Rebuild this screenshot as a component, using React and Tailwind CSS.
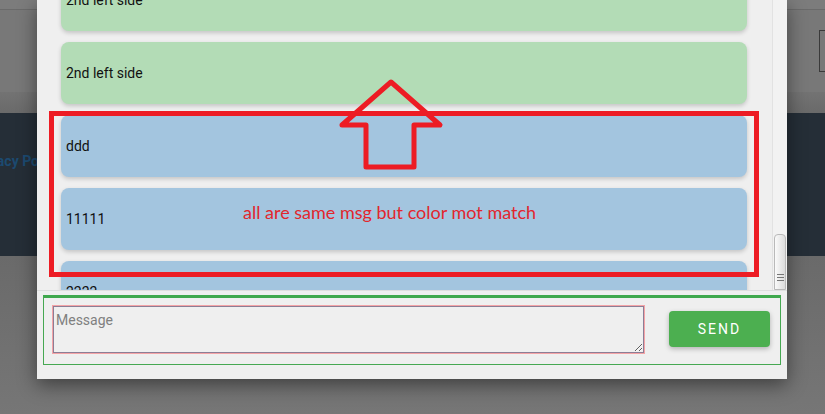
import React from "react";

const messages = [
  { text: "2nd left side", tone: "green" },
  { text: "2nd left side", tone: "green" },
  { text: "ddd", tone: "blue" },
  { text: "11111", tone: "blue" },
  { text: "2222", tone: "blue" },
];

const Bubble = ({ text, tone }) => (
  <div
    className={`h-[62px] mb-[11px] rounded-lg flex items-center pl-[5px] text-[14px] text-[#111] shadow-[0_2px_4px_rgba(0,0,0,0.18)] ${
      tone === "green" ? "bg-[#b3dcb6]" : "bg-[#a3c5df]"
    }`}
  >
    {text}
  </div>
);

export default function App() {
  return (
    <div className="relative w-[825px] h-[414px] overflow-hidden bg-[#717171]" style={{ fontFamily: "Roboto, 'Liberation Sans', sans-serif" }}>
      {/* page behind the overlay */}
      <div className="flex flex-col h-full">
        <div className="h-[10px] bg-[#7c7c7c] border-b border-[#6a6a6a]" />
        <div className="h-[82px] bg-[#787878] flex justify-end items-start pt-[20px]">
          <div className="w-[6px] h-[42px] border-l border-y border-[#3a3a3a]" />
        </div>
        <div className="h-[21px] bg-gradient-to-b from-[#737373] to-[#6a6a6a]" />
        <div className="h-[143px] bg-[#252e37] flex items-start pt-[38px]">
          <span className="-ml-[28px] text-[14px] font-bold text-[#1c4a70]">Privacy Policy</span>
        </div>
        <div className="flex-1 bg-gradient-to-b from-[#6a6a6a] to-[#767676]" />
      </div>

      {/* chat dialog */}
      <div className="absolute left-[37px] top-0 w-[750px] h-[379px] bg-[#efefef] flex flex-col shadow-[0_6px_18px_rgba(0,0,0,0.45)]">
        <div className="h-[290px] flex overflow-hidden">
          <div className="flex-1 overflow-hidden pl-[24px] pr-[25px]">
            <div className="-mt-[31px]">
              {messages.map((m, i) => (
                <Bubble key={i} {...m} />
              ))}
            </div>
          </div>
          {/* scrollbar */}
          <div className="w-[15px] bg-[#f2f2f2] border-l border-[#e2e2e2] flex flex-col justify-end">
            <div className="h-[56px] mx-[1px] bg-gradient-to-r from-[#fafafa] to-[#dcdcdc] border border-[#b9b9b9] rounded-t-sm flex flex-col items-center justify-end pb-[8px] gap-[2px]">
              <div className="w-[7px] h-px bg-[#777]" />
              <div className="w-[7px] h-px bg-[#777]" />
              <div className="w-[7px] h-px bg-[#777]" />
            </div>
          </div>
        </div>
        <div className="flex-1 border-t border-[#dedede] px-[6px] pt-[4px]">
          <div className="h-[70px] border border-t-[3px] border-[#46a852] border-t-[#3fa84d] flex items-center pl-[9px] pr-[10px]">
            <textarea
              placeholder="Message"
              className="w-[591px] h-[47px] mt-[-4px] bg-[#efefef] border border-[#8c7d95] shadow-[0_0_0_1px_#f4a3a6] px-[2px] pt-[3px] text-[14px] placeholder:text-[#808080] outline-none"
            />
            <button className="ml-auto w-[101px] h-[36px] mt-[-4px] bg-[#4caf50] rounded text-white text-[14px] font-normal tracking-[2px] shadow-[0_2px_5px_rgba(0,0,0,0.25)]">
              SEND
            </button>
          </div>
        </div>
      </div>

      {/* red annotation */}
      <div className="absolute left-[49px] top-[111px] w-[710px] h-[166px] border-[5px] border-[#ed1c24]" />
      <svg className="absolute left-0 top-0" width="825" height="414">
        <polygon
          points="391,82 440,125 414,125 414,167 366,167 366,125 342,125"
          fill="none"
          stroke="#ed1c24"
          strokeWidth="5"
          strokeLinejoin="round"
        />
      </svg>
      <div
        className="absolute left-[243px] top-[199px] text-[18px] text-[#e2262d] whitespace-nowrap"
        style={{ fontFamily: "Lato, 'Open Sans', sans-serif" }}
      >
        all are same msg but color mot match
      </div>
    </div>
  );
}
